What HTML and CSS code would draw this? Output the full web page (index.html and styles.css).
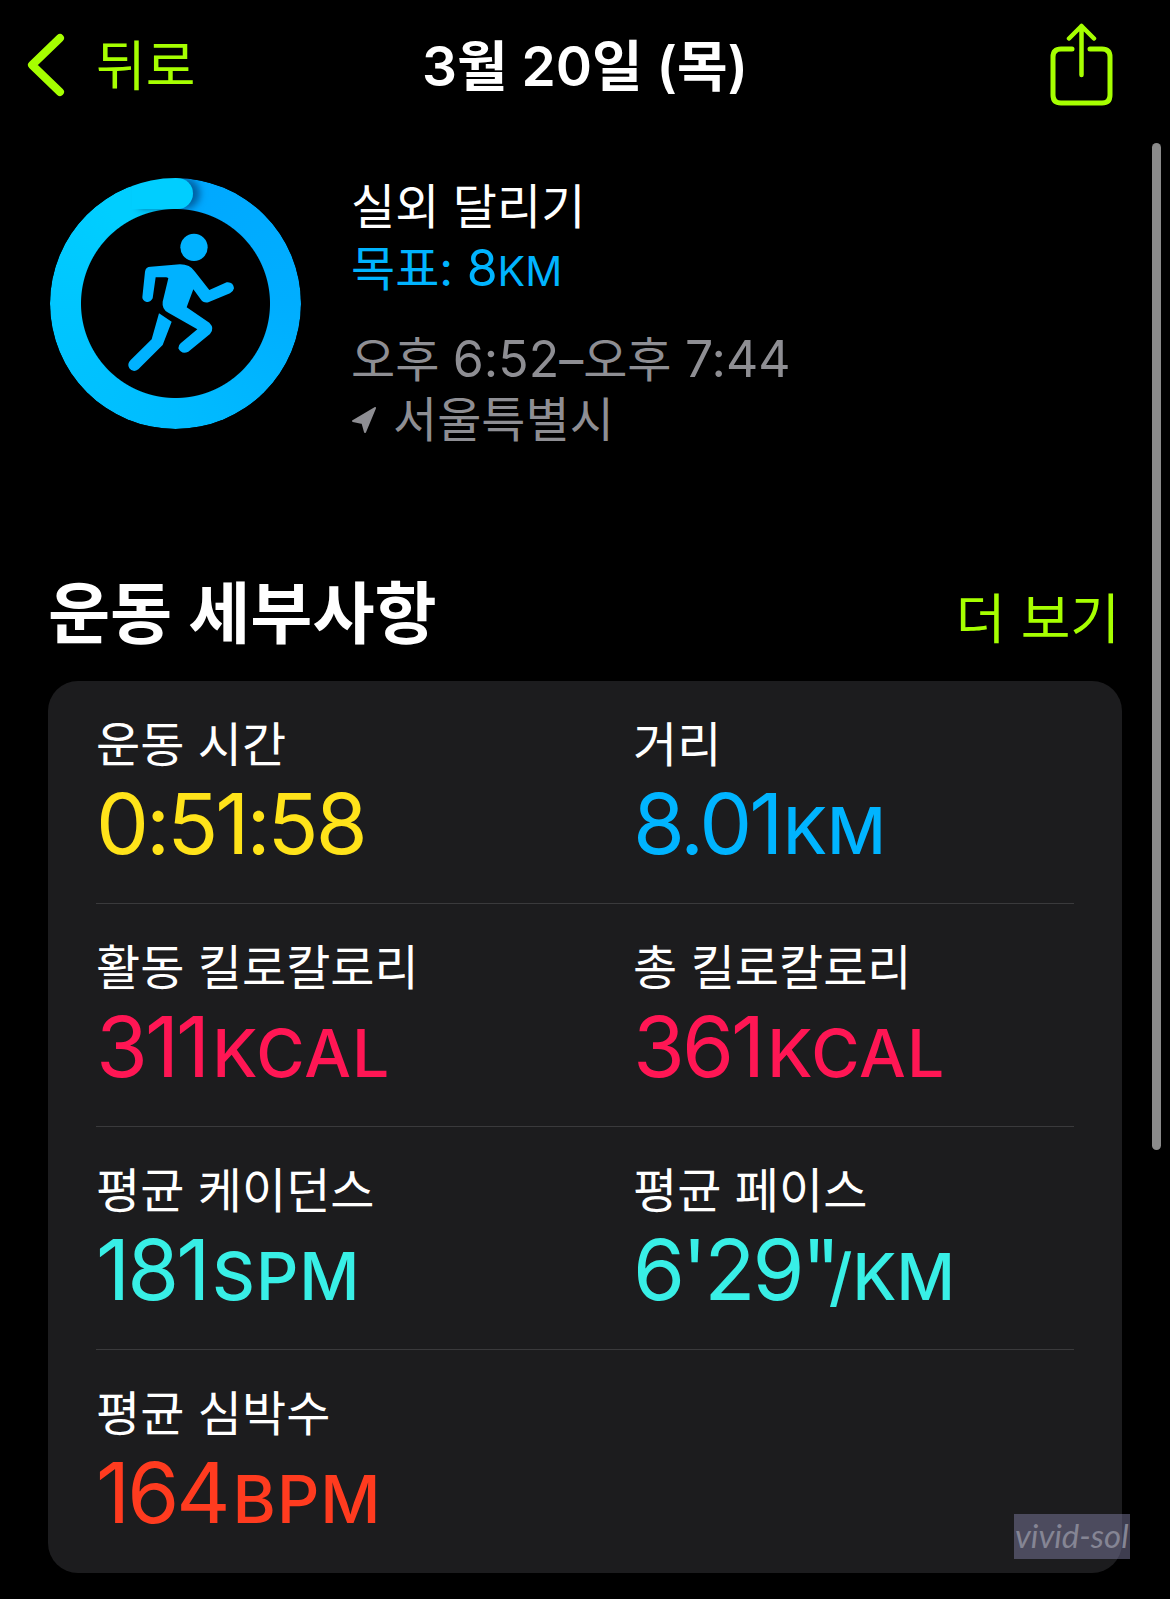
FILE: index.html
```html
<!DOCTYPE html>
<html lang="ko">

<head>
    <meta charset="UTF-8">
    <meta name="viewport" content="width=device-width, initial-scale=1.0">
    <title>운동 세부사항</title>
    <link rel="stylesheet" href="styles.css">
</head>

<body>
    <header class="top-bar">
        <a class="back-link">
            <svg class="back-icon" width="42" height="66" viewBox="0 0 42 66">
                <path d="M34 6 L6 33 L34 60" fill="none" stroke="#a6ff00" stroke-width="8" stroke-linecap="round" stroke-linejoin="round" />
            </svg>
            <span class="back-text">뒤로</span>
        </a>
        <h1 class="page-title">3월 20일 (목)</h1>
        <div class="share">
            <svg width="70" height="84" viewBox="0 0 70 84">
                <path d="M25 26 H14 Q6 26 6 34 V72 Q6 80 14 80 H55 Q63 80 63 72 V34 Q63 26 55 26 H43" fill="none" stroke="#a6ff00" stroke-width="5" stroke-linecap="round" />
                <path d="M34.5 52 V3 M22 15.500 L34.500 3 L47 15.500" fill="none" stroke="#a6ff00" stroke-width="4.500" stroke-linecap="round" stroke-linejoin="round" />
            </svg>
        </div>
    </header>

    <section class="hero">
        <div class="activity">
            <div class="ring">
                <div class="ring-cap"></div>
            </div>
            <svg class="runner" width="140" height="160" viewBox="0 0 420 480">
                <circle cx="252" cy="82" r="41" />
                <path d="M97 232 L105 155 Q107 140 122 140 L210 133 Q240 133 255 155 L298 210 L350 187 Q370 185 372 205 Q370 215 360 220 L295 247 Q280 250 272 238 L250 208 L230 262 L298 308 Q315 325 300 342 L235 395 Q215 405 205 385 Q205 375 212 370 L262 328 L175 278 Q155 268 158 245 L175 175 Q172 172 168 172 L137 172 L128 235 Q122 247 110 246 Q97 242 97 232 Z" />
                <path d="M147 280 L185 305 L158 375 L85 448 Q70 460 58 445 Q50 432 62 420 L125 358 Z" />
            </svg>
        </div>
        <div class="hero-text">
            <div class="hero-title">실외 달리기</div>
            <div class="hero-goal">목표: <span class="num">8</span><span class="unit-small">KM</span></div>
            <div class="hero-time">오후 <span class="num">6:52</span>–오후 <span class="num">7:44</span></div>
            <div class="hero-place">
                <svg width="26" height="28" viewBox="0 0 26 28">
                    <path d="M24 2 L2 15 L11.500 17 L14 26 Z" fill="#8e8e93" stroke="#8e8e93" stroke-width="2" stroke-linejoin="round" />
                </svg>
                <span>서울특별시</span>
            </div>
        </div>
    </section>

    <div class="section-head">
        <h2>운동 세부사항</h2>
        <a class="more-link">더 보기</a>
    </div>

    <section class="card">
        <div class="card-row">
            <div class="metric">
                <div class="metric-label">운동 시간</div>
                <div class="metric-value yellow">0:51:58</div>
            </div>
            <div class="metric">
                <div class="metric-label">거리</div>
                <div class="metric-value blue">8.01<span class="unit unit-km">KM</span></div>
            </div>
        </div>
        <div class="card-row">
            <div class="metric">
                <div class="metric-label">활동 킬로칼로리</div>
                <div class="metric-value pink">311<span class="unit">KCAL</span></div>
            </div>
            <div class="metric">
                <div class="metric-label">총 킬로칼로리</div>
                <div class="metric-value pink">361<span class="unit">KCAL</span></div>
            </div>
        </div>
        <div class="card-row">
            <div class="metric">
                <div class="metric-label">평균 케이던스</div>
                <div class="metric-value teal">181<span class="unit">SPM</span></div>
            </div>
            <div class="metric">
                <div class="metric-label">평균 페이스</div>
                <div class="metric-value teal">6'29"<span class="unit unit-km unit-slash">/KM</span></div>
            </div>
        </div>
        <div class="card-row">
            <div class="metric">
                <div class="metric-label">평균 심박수</div>
                <div class="metric-value red">164<span class="unit">BPM</span></div>
            </div>
        </div>
    </section>

    <div class="scrollbar"></div>
    <div class="watermark">vivid-sol</div>
</body>

</html>
```

FILE: styles.css
```css
* {
    box-sizing: border-box;
}

html,
body {
    margin: 0;
    height: 1599px;
    overflow: hidden;
    background-color: #000;
}

body {
    position: relative;
    color: #fff;
    font-family: Inter, "Noto Sans CJK KR", sans-serif;
}

.top-bar {
    display: grid;
    grid-template-columns: 1fr auto 1fr;
    align-items: center;
    height: 130px;
}

.back-link {
    display: flex;
    align-items: center;
    gap: 28px;
    padding-left: 26px;
    color: #a6ff00;
    font-size: 54px;
}

.back-text {
    padding-bottom: 6px;
}

.page-title {
    margin: 0 0 6px;
    font-size: 55px;
    font-weight: 600;
}

.share {
    display: flex;
    justify-content: flex-end;
    padding-right: 53px;
}

.hero {
    display: flex;
    gap: 50px;
    margin-top: 48px;
    padding-left: 50px;
}

.activity {
    position: relative;
    width: 251px;
    height: 251px;
}

.ring {
    position: relative;
    width: 251px;
    height: 251px;
    border-radius: 50%;
    background: conic-gradient(#00a8ff 0deg, #00aeff 90deg, #00bcff 180deg, #00c6ff 270deg, #00ceff 325deg);
    -webkit-mask: radial-gradient(closest-side, transparent 94px, #000 95px);
    mask: radial-gradient(closest-side, transparent 94px, #000 95px);
}

.ring-cap {
    position: absolute;
    top: 0;
    left: 82px;
    width: 61px;
    height: 31px;
    border-radius: 0 16px 16px 0;
    background-color: #00ceff;
    box-shadow: 7px 0 7px rgba(0, 40, 90, 0.55);
}

.runner {
    position: absolute;
    top: 42px;
    left: 60px;
    fill: #00b2ff;
}

.hero-text {
    font-size: 48px;
    line-height: 62px;
}

.hero-title {
    margin-top: -1px;
    line-height: 60px;
}

.hero-goal {
    color: #00b4ff;
}

.num {
    font-size: 50px;
}

.unit-small {
    font-size: 41px;
}

.hero-time {
    margin-top: 26px;
    color: #8e8e93;
}

.hero-place {
    display: flex;
    align-items: center;
    gap: 16px;
    margin-top: -2px;
    color: #8e8e93;
}

.section-head {
    display: flex;
    justify-content: space-between;
    align-items: center;
    height: 80px;
    margin: 123px 50px 0 48px;
}

.section-head h2 {
    margin: 0;
    font-size: 67.5px;
    font-weight: 700;
    line-height: 80px;
}

.more-link {
    padding-top: 2px;
    color: #a6ff00;
    font-size: 54px;
}

.card {
    width: 1074px;
    height: 892px;
    margin: 27px 0 0 48px;
    padding: 0 48px;
    border-radius: 30px;
    background-color: #1c1c1e;
}

.card-row {
    display: grid;
    grid-template-columns: 537px 1fr;
    height: 223px;
    padding-top: 33px;
    border-bottom: 1px solid #3a3a3c;
}

.card-row:last-child {
    border-bottom: none;
}

.metric-label {
    font-size: 48px;
    line-height: 62px;
}

.metric-value {
    font-size: 84px;
    font-weight: 400;
    line-height: 96px;
    letter-spacing: -3px;
}

.unit {
    margin-left: 5px;
    font-size: 66px;
    font-weight: 500;
    letter-spacing: 1px;
}

.unit-km {
    margin-left: 3px;
    font-size: 64px;
    letter-spacing: 0;
}

.unit-slash {
    margin-left: -9px;
}

.yellow {
    color: #ffe31a;
}

.blue {
    color: #00b4ff;
}

.pink {
    color: #ff1654;
}

.teal {
    color: #38efe6;
}

.red {
    color: #ff3b1f;
}

.scrollbar {
    position: absolute;
    top: 143px;
    left: 1152px;
    width: 9px;
    height: 1007px;
    border-radius: 5px;
    background-color: #8a8a8a;
}

.watermark {
    position: absolute;
    top: 1514px;
    left: 1014px;
    width: 116px;
    height: 45px;
    padding-left: 1px;
    background-color: rgba(124, 122, 158, 0.5);
    color: #858594;
    font-family: Lato, sans-serif;
    font-size: 33px;
    font-style: italic;
    line-height: 42px;
    white-space: nowrap;
}
```
